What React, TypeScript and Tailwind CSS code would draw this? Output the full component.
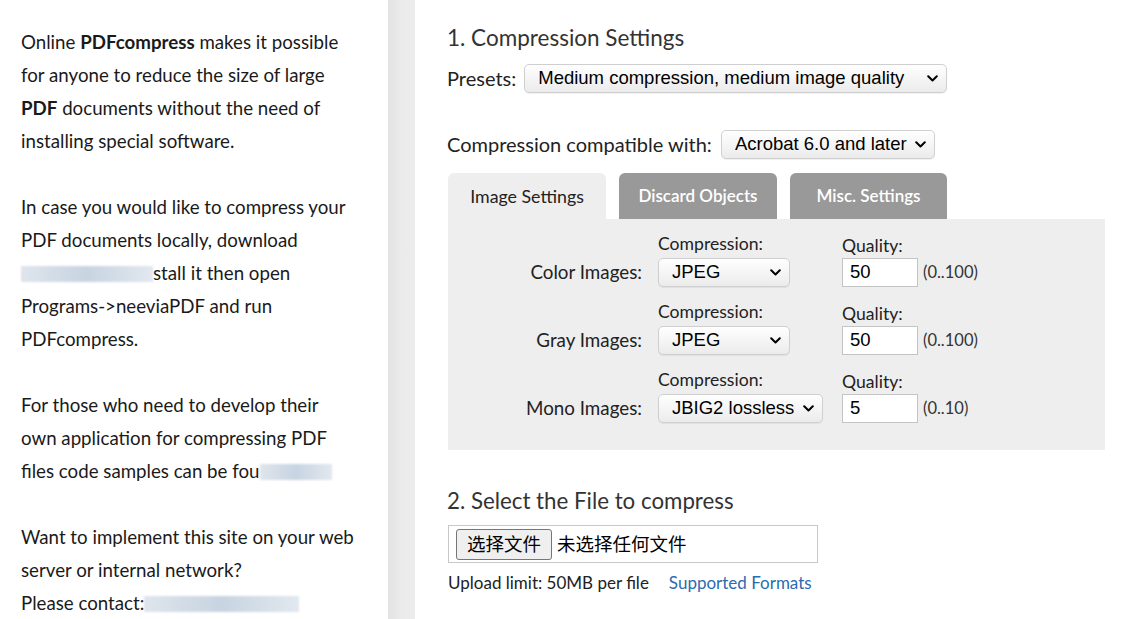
const sans = "font-['Lato','Noto_Sans_CJK_SC',sans-serif]";
const arial = "font-['Liberation_Sans','Noto_Sans_CJK_SC',sans-serif]";
const cjk = "font-['Noto_Sans_CJK_SC',sans-serif]";

function Chevron() {
  return (
    <svg width="11" height="7" viewBox="0 0 11 7" className="shrink-0">
      <polyline points="1.2,1.2 5.5,5.5 9.8,1.2" fill="none" stroke="#000" strokeWidth="2" strokeLinecap="round" strokeLinejoin="round" />
    </svg>
  );
}

function FakeSelect({ value, width }: { value: string; width: string }) {
  return (
    <div
      className={`${width} ${arial} flex h-[29px] items-center justify-between rounded-[5px] border border-[#cfcfcf] bg-linear-to-b from-white to-[#ebebeb] pl-[13px] pr-[8px] text-[18.5px] text-black shadow-[0_1px_1px_rgba(0,0,0,0.06)]`}
    >
      <span className="leading-none">{value}</span>
      <Chevron />
    </div>
  );
}

function Blur({ width }: { width: string }) {
  return (
    <span
      className={`${width} inline-block h-[16px] align-[-2px] bg-linear-to-r from-[#dfe5ec] via-[#c7d4e1] to-[#e2e8ee] blur-[1px]`}
    />
  );
}

function ImageRow({ label, value, selectWidth, quality, range }: { label: string; value: string; selectWidth: string; quality: string; range: string }) {
  return (
    <div className="flex items-end">
      <div className="flex h-[29px] w-[194px] items-center justify-end text-[18.8px] leading-none text-[#222]">{label}</div>
      <div className="ml-[16px] flex w-[184px] flex-col">
        <div className="mb-[3px] text-[17.6px] leading-[22px] text-[#222]">Compression:</div>
        <FakeSelect value={value} width={selectWidth} />
      </div>
      <div className="flex flex-col">
        <div className="mb-[1px] text-[17.6px] leading-[22px] text-[#222]">Quality:</div>
        <div className="flex items-center">
          <div className={`${arial} flex h-[29px] w-[76px] items-center border border-[#c4c4c4] bg-white pl-[7px] text-[18.5px] leading-none text-black`}>
            {quality}
          </div>
          <span className="ml-[5px] text-[16.5px] leading-none text-[#333]">{range}</span>
        </div>
      </div>
    </div>
  );
}

export default function App() {
  return (
    <div className={`${sans} flex h-screen overflow-hidden bg-white`}>
      {/* left column */}
      <div className="w-[388px] shrink-0 pl-[21px] pt-[26px] text-[18.7px] leading-[33px] text-[#1a1a1a]">
        <p>
          Online <b className="font-bold">PDFcompress</b> makes it possible<br />
          for anyone to reduce the size of large<br />
          <b className="font-bold">PDF</b> documents without the need of<br />
          installing special software.
        </p>
        <p className="mt-[33px]">
          In case you would like to compress your<br />
          PDF documents locally, download<br />
          <Blur width="w-[132px]" />stall it then open<br />
          Programs-&gt;neeviaPDF and run<br />
          PDFcompress.
        </p>
        <p className="mt-[33px]">
          For those who need to develop their<br />
          own application for compressing PDF<br />
          files code samples can be fou<Blur width="w-[72px]" />
        </p>
        <p className="mt-[33px]">
          Want to implement this site on your web<br />
          server or internal network?<br />
          Please contact:<Blur width="w-[155px]" />
        </p>
      </div>

      {/* divider strip */}
      <div className="w-[27px] shrink-0 bg-linear-to-r from-[#e3e3e3] via-[#ebebeb] to-[#ececec]" />

      {/* main */}
      <div className="flex-1 pl-[32px] pt-[23px] text-[#222]">
        <h2 className="text-[22.5px] leading-[29px] text-[#333]">1. Compression Settings</h2>

        <div className="mt-[12px] flex items-center">
          <span className="text-[20px] leading-[29px]">Presets:</span>
          <div className="ml-[8px]">
            <FakeSelect value="Medium compression, medium image quality" width="w-[423px]" />
          </div>
        </div>

        <div className="mt-[37px] flex items-center">
          <span className="text-[20px] leading-[29px]">Compression compatible with:</span>
          <div className="ml-[9px]">
            <FakeSelect value="Acrobat 6.0 and later" width="w-[214px]" />
          </div>
        </div>

        {/* tabs */}
        <div className="mt-[14px] flex gap-[13px] pl-px">
          <div className="flex h-[46px] w-[158px] items-center justify-center rounded-t-[6px] bg-[#eeeeee] text-[17.8px] text-[#222]">
            Image Settings
          </div>
          <div className="flex h-[46px] w-[158px] items-center justify-center rounded-t-[6px] bg-[#999999] text-[17px] font-semibold text-white">
            Discard Objects
          </div>
          <div className="flex h-[46px] w-[157px] items-center justify-center rounded-t-[6px] bg-[#999999] text-[17px] font-semibold text-white">
            Misc. Settings
          </div>
        </div>

        <div className="ml-px flex h-[231px] w-[657px] flex-col gap-[14px] bg-[#eeeeee] pt-[14px]">
          <ImageRow label="Color Images:" value="JPEG" selectWidth="w-[132px]" quality="50" range="(0..100)" />
          <ImageRow label="Gray Images:" value="JPEG" selectWidth="w-[132px]" quality="50" range="(0..100)" />
          <ImageRow label="Mono Images:" value="JBIG2 lossless" selectWidth="w-[165px]" quality="5" range="(0..10)" />
        </div>

        <h2 className="mt-[36px] text-[22.3px] leading-[29px] text-[#333]">2. Select the File to compress</h2>

        <div className="ml-px mt-[10px] flex h-[38px] w-[370px] items-center border border-[#c8c8c8] pl-[7px]">
          <div className={`${cjk} flex h-[31px] items-center rounded-[3px] border border-[#767676] bg-[#efefef] px-[10px] text-[18.5px] text-black`}>
            选择文件
          </div>
          <span className={`${cjk} ml-[5px] text-[18.5px] text-black`}>未选择任何文件</span>
        </div>

        <div className="mt-[9px] flex items-center text-[17px] leading-[22px]">
          <span className="pl-px">Upload limit: 50MB per file</span>
          <a className="ml-[20px] text-[#2b6cb0]">Supported Formats</a>
        </div>
      </div>
    </div>
  );
}
